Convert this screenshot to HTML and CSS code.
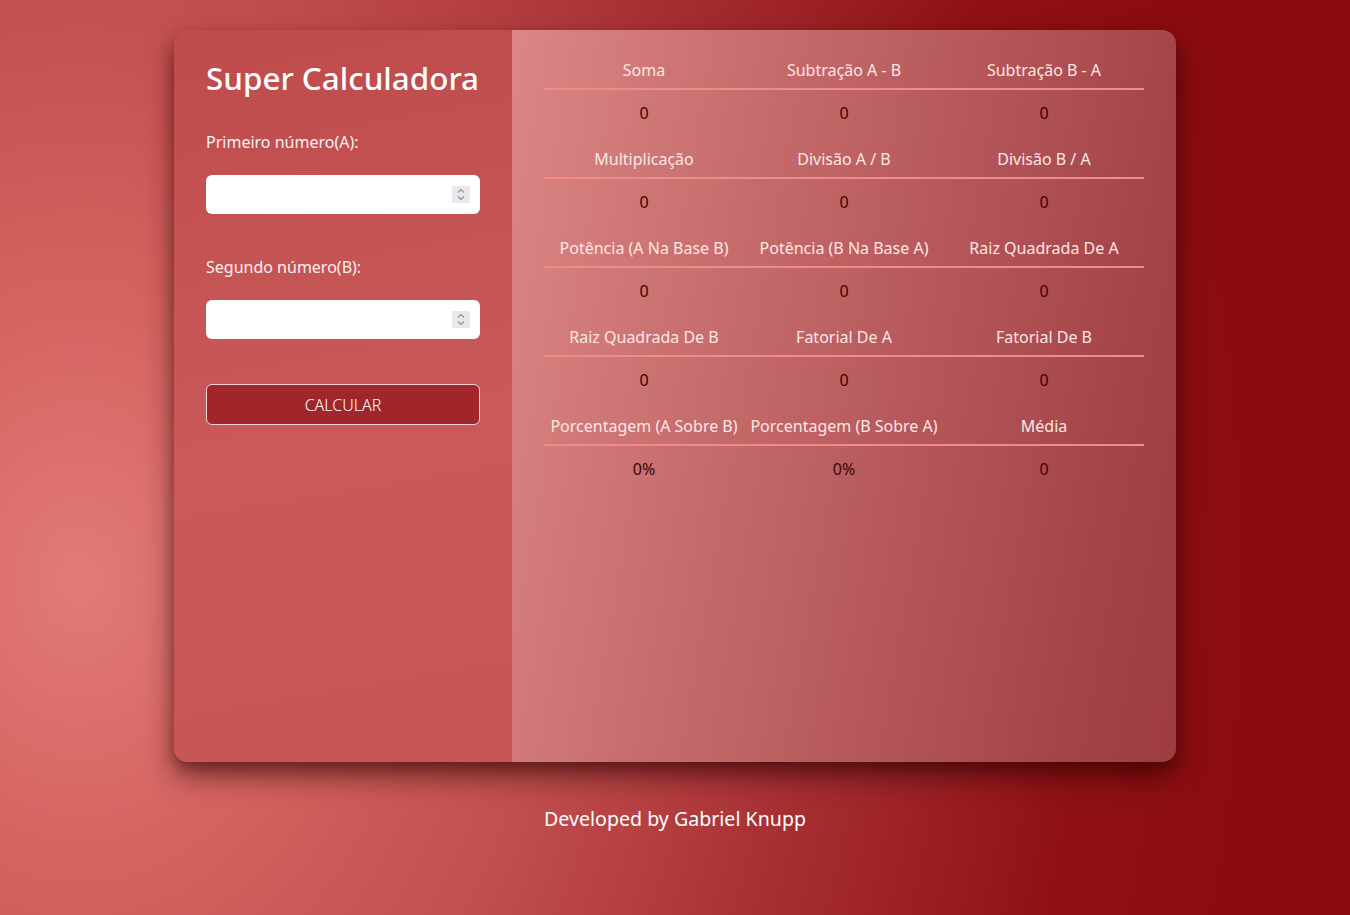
FILE: index.html
```html
<!DOCTYPE html>
<html lang="pt-BR">
<head>
<meta charset="utf-8">
<title>Super Calculadora</title>
<link rel="stylesheet" href="styles.css">
</head>
<body>
<main class="page">
  <section class="card">
    <div class="inputs">
      <h1 class="title">Super Calculadora</h1>
      <label class="label" for="a">Primeiro número(A):</label>
      <div class="field-wrap">
        <input class="field" id="a" type="number">
        <span class="spin"><svg width="18" height="17" viewBox="0 0 18 17"><path d="M6 6.5l3-3 3 3M6 10.5l3 3 3-3" fill="none" stroke="#8e8e9c" stroke-width="1.1"/></svg></span>
      </div>
      <label class="label label-b" for="b">Segundo número(B):</label>
      <div class="field-wrap">
        <input class="field" id="b" type="number">
        <span class="spin"><svg width="18" height="17" viewBox="0 0 18 17"><path d="M6 6.5l3-3 3 3M6 10.5l3 3 3-3" fill="none" stroke="#8e8e9c" stroke-width="1.1"/></svg></span>
      </div>
      <button class="btn" type="button">CALCULAR</button>
    </div>
    <div class="results">
      <table class="grid">
        <tr class="head"><th>Soma</th><th>Subtração A - B</th><th>Subtração B - A</th></tr>
        <tr class="vals"><td>0</td><td>0</td><td>0</td></tr>
        <tr class="head"><th>Multiplicação</th><th>Divisão A / B</th><th>Divisão B / A</th></tr>
        <tr class="vals"><td>0</td><td>0</td><td>0</td></tr>
        <tr class="head"><th>Potência (A Na Base B)</th><th>Potência (B Na Base A)</th><th>Raiz Quadrada De A</th></tr>
        <tr class="vals"><td>0</td><td>0</td><td>0</td></tr>
        <tr class="head"><th>Raiz Quadrada De B</th><th>Fatorial De A</th><th>Fatorial De B</th></tr>
        <tr class="vals"><td>0</td><td>0</td><td>0</td></tr>
        <tr class="head"><th>Porcentagem (A Sobre B)</th><th>Porcentagem (B Sobre A)</th><th>Média</th></tr>
        <tr class="vals"><td>0%</td><td>0%</td><td>0</td></tr>
      </table>
    </div>
  </section>
  <footer class="footer">Developed by Gabriel Knupp</footer>
</main>
</body>
</html>
```
FILE: styles.css
```css
* { box-sizing: border-box; }
html, body { margin: 0; height: 100%; }
body {
  font-family: "Noto Sans", "DejaVu Sans", sans-serif;
  color: #fff;
  background:
    radial-gradient(ellipse 1180px 1500px at 80px 580px, #e27b77 0px, #d4625f 230px, #c24e4e 470px, #a62e32 740px, #8f1115 1000px, #8a0c10 1180px);
  background-color: #8a0c10;
}
.page {
  min-height: 100%;
  display: flex;
  flex-direction: column;
  align-items: center;
  padding-top: 30px;
}
.card {
  width: 1002px;
  height: 732px;
  display: flex;
  border-radius: 14px;
  overflow: hidden;
  box-shadow: 0 14px 28px rgba(40, 0, 0, 0.55), 0 6px 12px rgba(40, 0, 0, 0.25);
}
.inputs {
  width: 338px;
  flex: none;
  padding: 28px 32px;
  display: flex;
  flex-direction: column;
  background: linear-gradient(170deg, #bf4b4c 0%, #c95a59 55%, #c65654 100%);
}
.title {
  margin: 0;
  font-size: 31.4px;
  line-height: 40px;
  font-weight: 500;
  white-space: nowrap;
}
.label {
  font-size: 16px;
  line-height: 19px;
  margin-top: 35px;
  color: #fdf1f0;
}
.label-b { margin-top: 44px; }
.field-wrap {
  position: relative;
  margin-top: 23px;
  width: 274px;
  height: 39px;
}
.field {
  display: block;
  height: 39px;
  width: 274px;
  border: 0;
  border-radius: 6px;
  background: #fff;
  padding: 0 34px 0 10px;
  font-size: 16px;
  font-family: inherit;
  outline: none;
  -moz-appearance: textfield;
}
.field::-webkit-inner-spin-button,
.field::-webkit-outer-spin-button {
  -webkit-appearance: none;
  margin: 0;
}
.spin {
  position: absolute;
  right: 10px;
  top: 11px;
  width: 18px;
  height: 17px;
  background: #e9e9ed;
  display: flex;
}
.btn {
  margin-top: 45px;
  height: 41px;
  width: 274px;
  background: #a0262b;
  border: 1px solid #f2d4d4;
  border-radius: 6px;
  color: #fff;
  font-family: inherit;
  font-size: 16px;
  font-weight: 300;
}
.results {
  flex: 1;
  padding: 19px 32px;
  background: linear-gradient(100deg, #db8785 0%, #c86e6e 30%, #b5575a 60%, #a44448 85%, #9e3c40 100%);
}
.grid {
  width: 600px;
  border-collapse: collapse;
  table-layout: fixed;
}
.grid th {
  font-weight: 400;
  font-size: 16px;
  line-height: 19px;
  padding: 12px 0 8px;
  color: #fde6e4;
  border-bottom: 2px solid #f18a88;
  white-space: nowrap;
}
.grid td {
  text-align: center;
  font-size: 16px;
  line-height: 19px;
  padding: 14px 0 15px;
  color: #3c0303;
}
.footer {
  margin-top: 45px;
  font-size: 19.6px;
  line-height: 24px;
  color: #fff;
}
```
